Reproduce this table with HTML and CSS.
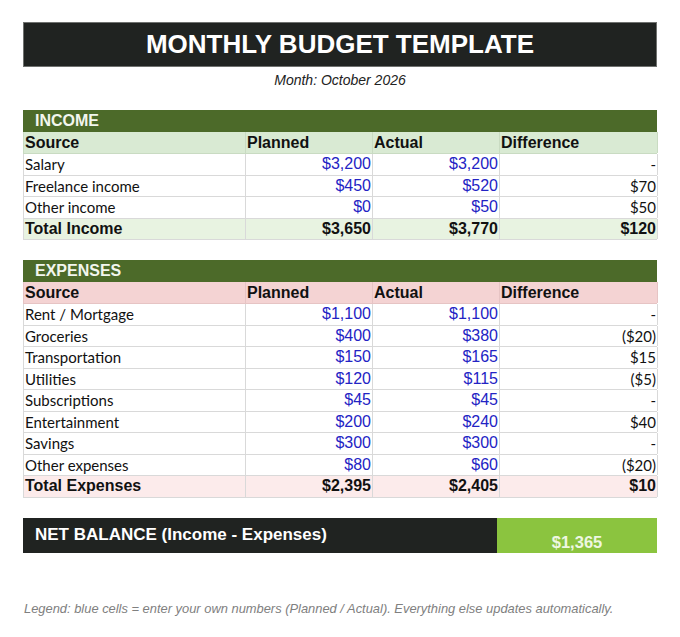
FILE: index.html
```html
<!DOCTYPE html>
<html lang="en">
<head>
<meta charset="utf-8">
<title>Monthly Budget Template</title>
<link rel="stylesheet" href="styles.css">
</head>
<body>
<div class="page">
  <div class="title">MONTHLY BUDGET TEMPLATE</div>
  <div class="month">Month: October 2026</div>

  <section class="sheet income">
    <div class="bar">INCOME</div>
    <div class="row head">
      <div class="c">Source</div><div class="c">Planned</div><div class="c">Actual</div><div class="c">Difference</div>
    </div>
    <div class="row">
      <div class="c lbl">Salary</div><div class="c num in">$3,200</div><div class="c num in">$3,200</div><div class="c diff">-</div>
    </div>
    <div class="row">
      <div class="c lbl">Freelance income</div><div class="c num in">$450</div><div class="c num in">$520</div><div class="c diff">$70</div>
    </div>
    <div class="row">
      <div class="c lbl">Other income</div><div class="c num in">$0</div><div class="c num in">$50</div><div class="c diff">$50</div>
    </div>
    <div class="row total">
      <div class="c">Total Income</div><div class="c num">$3,650</div><div class="c num">$3,770</div><div class="c num">$120</div>
    </div>
  </section>

  <section class="sheet expenses">
    <div class="bar">EXPENSES</div>
    <div class="row head">
      <div class="c">Source</div><div class="c">Planned</div><div class="c">Actual</div><div class="c">Difference</div>
    </div>
    <div class="row">
      <div class="c lbl">Rent / Mortgage</div><div class="c num in">$1,100</div><div class="c num in">$1,100</div><div class="c diff">-</div>
    </div>
    <div class="row">
      <div class="c lbl">Groceries</div><div class="c num in">$400</div><div class="c num in">$380</div><div class="c diff">($20)</div>
    </div>
    <div class="row">
      <div class="c lbl">Transportation</div><div class="c num in">$150</div><div class="c num in">$165</div><div class="c diff">$15</div>
    </div>
    <div class="row">
      <div class="c lbl">Utilities</div><div class="c num in">$120</div><div class="c num in">$115</div><div class="c diff">($5)</div>
    </div>
    <div class="row">
      <div class="c lbl">Subscriptions</div><div class="c num in">$45</div><div class="c num in">$45</div><div class="c diff">-</div>
    </div>
    <div class="row">
      <div class="c lbl">Entertainment</div><div class="c num in">$200</div><div class="c num in">$240</div><div class="c diff">$40</div>
    </div>
    <div class="row">
      <div class="c lbl">Savings</div><div class="c num in">$300</div><div class="c num in">$300</div><div class="c diff">-</div>
    </div>
    <div class="row">
      <div class="c lbl">Other expenses</div><div class="c num in">$80</div><div class="c num in">$60</div><div class="c diff">($20)</div>
    </div>
    <div class="row total">
      <div class="c">Total Expenses</div><div class="c num">$2,395</div><div class="c num">$2,405</div><div class="c num">$10</div>
    </div>
  </section>

  <div class="net">
    <div class="net-label">NET BALANCE (Income - Expenses)</div>
    <div class="net-value">$1,365</div>
  </div>

  <p class="legend">Legend: blue cells = enter your own numbers (Planned / Actual). Everything else updates automatically.</p>
</div>
</body>
</html>
```

FILE: styles.css
```css
html, body {
  margin: 0;
  padding: 0;
  background: #ffffff;
}

body {
  font-family: "Liberation Sans", Arial, sans-serif;
  color: #111111;
}

.page {
  width: 634px;
  padding: 22px 23px 0 23px;
}

.title {
  height: 45px;
  box-sizing: border-box;
  border: 1px solid #6f716f;
  background: #202321;
  color: #ffffff;
  font-weight: bold;
  font-size: 26px;
  display: flex;
  align-items: center;
  justify-content: center;
}

.month {
  font-style: italic;
  font-size: 14px;
  color: #222222;
  text-align: center;
  line-height: 16px;
  margin-top: 5px;
}

.sheet {
  display: flex;
  flex-direction: column;
}

.income {
  margin-top: 22px;
}

.expenses {
  margin-top: 20px;
}

.bar {
  height: 21.5px;
  box-sizing: border-box;
  background: #4c6a29;
  color: #f2f6ee;
  font-weight: bold;
  font-size: 16px;
  padding-left: 12px;
  display: flex;
  align-items: center;
}

.row {
  display: grid;
  grid-template-columns: 222px 127px 127px 158px;
  height: 21.5px;
  box-sizing: border-box;
  border-bottom: 1px solid #d9d9d9;
  border-left: 1px solid #d9d9d9;
}

.row.head {
  height: 22.5px;
  font-weight: bold;
  font-size: 16px;
}

.row.head .c {
  padding-top: 2px;
}

.income .row.head {
  background: #d9ead3;
  border-color: #c9dbc2;
}

.expenses .row.head {
  background: #f4d3d3;
  border-color: #e6c4c4;
}

.row.total {
  font-weight: bold;
  font-size: 16px;
}

.income .row.total {
  background: #e8f3e1;
}

.expenses .row.total {
  background: #fcebeb;
}

.c {
  display: flex;
  align-items: center;
  padding: 0 1px 0 1px;
  border-right: 1px solid #d9d9d9;
  white-space: nowrap;
  overflow: hidden;
}

.income .row.head .c {
  border-right-color: #c9dbc2;
}

.expenses .row.head .c {
  border-right-color: #e6c4c4;
}

.lbl {
  font-family: Lato, "Open Sans", sans-serif;
  font-size: 15px;
  color: #111111;
}

.num {
  justify-content: flex-end;
  font-size: 16px;
}

.num.in {
  color: #2323c4;
}

.diff {
  justify-content: flex-end;
  font-family: Lato, "Open Sans", sans-serif;
  font-size: 15px;
  color: #111111;
}

.net {
  margin-top: 20px;
  display: flex;
  height: 35px;
}

.net-label {
  width: 474px;
  box-sizing: border-box;
  background: #202321;
  color: #ffffff;
  font-weight: bold;
  font-size: 17px;
  padding-left: 12px;
  display: flex;
  align-items: center;
}

.net-value {
  flex: 1;
  background: #8bc43f;
  color: #eef7e2;
  font-weight: bold;
  font-size: 16.5px;
  display: flex;
  align-items: flex-end;
  justify-content: center;
  padding-bottom: 1px;
}

.legend {
  margin: 48px 0 0 1px;
  font-style: italic;
  font-size: 12.9px;
  line-height: 16px;
  color: #808080;
}
```
